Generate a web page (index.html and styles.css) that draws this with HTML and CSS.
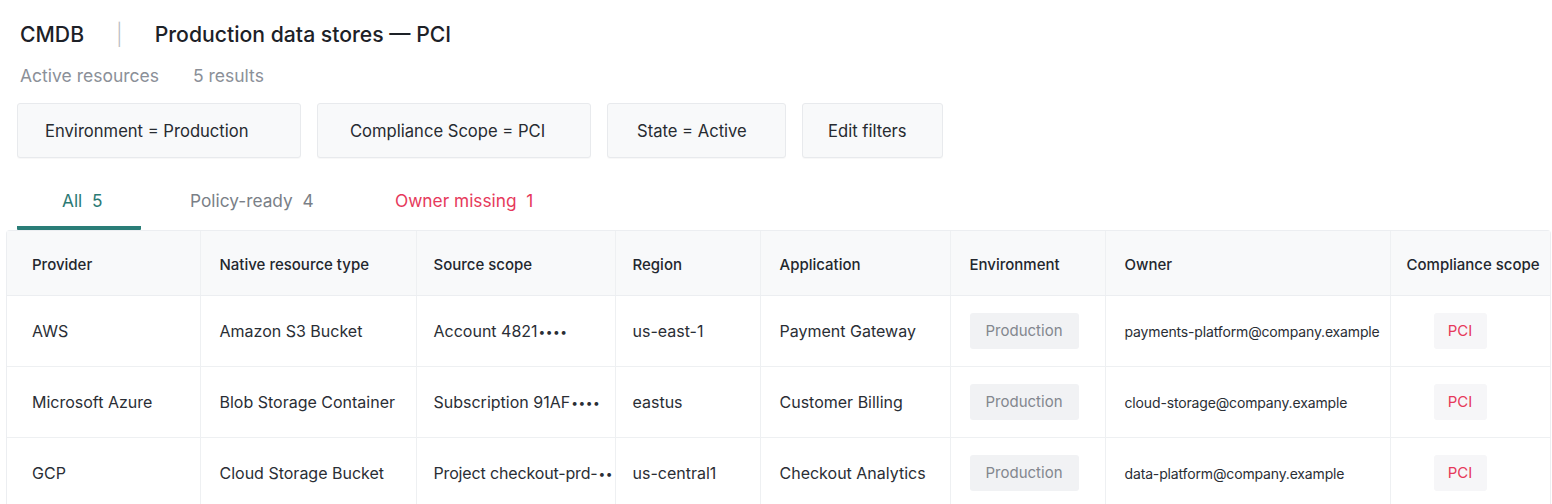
FILE: index.html
```html
<!DOCTYPE html>
<html lang="en">
<head>
<meta charset="utf-8">
<title>CMDB — Production data stores — PCI</title>
<link rel="stylesheet" href="styles.css">
</head>
<body>
<div class="page">
  <header class="head">
    <h1 class="title"><span class="crumb">CMDB</span><span class="sep">|</span><span class="view">Production data stores — PCI</span></h1>
    <div class="sub"><span>Active resources</span><span>5 results</span></div>
  </header>
  <div class="filters">
    <button class="chip chip-env">Environment = Production</button>
    <button class="chip chip-scope">Compliance Scope = PCI</button>
    <button class="chip chip-state">State = Active</button>
    <button class="chip chip-edit">Edit filters</button>
  </div>
  <nav class="tabs">
    <a class="tab tab-active">All&nbsp; 5</a>
    <a class="tab tab-muted">Policy-ready&nbsp; 4</a>
    <a class="tab tab-alert">Owner missing&nbsp; 1</a>
  </nav>
  <div class="table-wrap">
    <table class="grid">
      <colgroup>
        <col class="c1"><col class="c2"><col class="c3"><col class="c4"><col class="c5"><col class="c6"><col class="c7"><col class="c8">
      </colgroup>
      <thead>
        <tr>
          <th class="p1">Provider</th>
          <th>Native resource type</th>
          <th class="p3">Source scope</th>
          <th class="p3">Region</th>
          <th>Application</th>
          <th>Environment</th>
          <th>Owner</th>
          <th class="p8">Compliance scope</th>
        </tr>
      </thead>
      <tbody>
        <tr>
          <td class="p1">AWS</td>
          <td>Amazon S3 Bucket</td>
          <td class="p3">Account 4821<span class="mask">••••</span></td>
          <td class="p3">us-east-1</td>
          <td>Payment Gateway</td>
          <td><span class="badge badge-env">Production</span></td>
          <td class="owner">payments-platform@company.example</td>
          <td class="pci-cell"><span class="badge badge-pci">PCI</span></td>
        </tr>
        <tr>
          <td class="p1">Microsoft Azure</td>
          <td>Blob Storage Container</td>
          <td class="p3">Subscription 91AF<span class="mask">••••</span></td>
          <td class="p3">eastus</td>
          <td>Customer Billing</td>
          <td><span class="badge badge-env">Production</span></td>
          <td class="owner">cloud-storage@company.example</td>
          <td class="pci-cell"><span class="badge badge-pci">PCI</span></td>
        </tr>
        <tr>
          <td class="p1">GCP</td>
          <td>Cloud Storage Bucket</td>
          <td class="p3 tight">Project checkout-prd-<span class="mask">••</span></td>
          <td class="p3">us-central1</td>
          <td>Checkout Analytics</td>
          <td><span class="badge badge-env">Production</span></td>
          <td class="owner">data-platform@company.example</td>
          <td class="pci-cell"><span class="badge badge-pci">PCI</span></td>
        </tr>
      </tbody>
    </table>
  </div>
</div>
</body>
</html>
```

FILE: styles.css
```css
* { box-sizing: border-box; }
html, body { margin: 0; padding: 0; background: #ffffff; }
body {
  font-family: Inter, "Noto Sans", "Liberation Sans", sans-serif;
  color: #23272e;
  overflow: hidden;
}
.page { padding: 0 0 0 6px; }

.head { padding: 19px 0 0 14px; }
.title {
  margin: 0;
  font-size: 21.2px;
  font-weight: 500;
  line-height: 30px;
  color: #1d2127;
  display: flex;
  align-items: center;
}
.sep { color: #b9bdc3; font-weight: 300; margin: 0 32px 0 32px; }
.sub {
  margin-top: 16px;
  display: flex;
  gap: 34px;
  font-size: 17.5px;
  line-height: 22px;
  color: #8b9098;
}

.filters {
  display: flex;
  gap: 16px;
  padding: 16px 0 0 11px;
}
.chip {
  font: inherit;
  font-size: 16.6px;
  color: #272b31;
  background: #f8f9fa;
  border: 1px solid #e8eaed;
  border-radius: 3px;
  height: 55px;
  padding: 0 27px;
  box-shadow: 0 1px 1px rgba(0,0,0,0.03);
  text-align: left;
}
.chip-env { width: 284px; }
.chip-scope { width: 274px; padding-left: 32px; }
.chip-state { width: 179px; padding-left: 29px; }
.chip-edit { width: 141px; padding-left: 25px; }

.tabs {
  display: flex;
  padding: 15px 0 0 11px;
  height: 72px;
}
.tab {
  font-size: 17.3px;
  line-height: 20px;
  padding: 18px 0 0;
  text-decoration: none;
}
.tab-active {
  color: #2b7a74;
  width: 124px;
  padding-left: 45px;
  border-bottom: 4px solid #2a7d77;
  border-radius: 1px;
}
.tab-muted { color: #7a7f87; padding-left: 49px; width: 254px; }
.tab-alert { color: #e6395b; }

.table-wrap {
  border: 1px solid #eceef1;
  border-bottom: none;
  border-radius: 4px 4px 0 0;
  width: 1545px;
}
.grid {
  border-collapse: collapse;
  table-layout: fixed;
  width: 100%;
}
.c1 { width: 193px; } .c2 { width: 216px; } .c3 { width: 199px; } .c4 { width: 145px; }
.c5 { width: 190px; } .c6 { width: 155px; } .c7 { width: 285px; } .c8 { width: 160px; }

.grid th, .grid td {
  text-align: left;
  padding: 0 0 0 19px;
  border-left: 1px solid #eef0f2;
  white-space: nowrap;
  overflow: hidden;
}
.grid th:first-child, .grid td:first-child { border-left: none; }
.grid th {
  height: 64px;
  padding-top: 3px;
  background: #f8f9fa;
  font-size: 15px;
  font-weight: 500;
  color: #23272e;
  border-bottom: 1px solid #eceef1;
}
.grid td {
  height: 71px;
  padding-top: 1px;
  font-size: 16px;
  color: #2a2e35;
  border-bottom: 1px solid #eef0f2;
}
.grid .p1 { padding-left: 25px; }
.grid .p3 { padding-left: 17px; }
.grid .p8 { padding-left: 16px; }
.grid td.tight { letter-spacing: -0.15px; }
.mask { font-size: 12px; letter-spacing: 0.5px; margin-left: 1px; position: relative; top: -1px; }
.grid td.owner { font-size: 14px; letter-spacing: -0.15px; }
.grid td.pci-cell { padding-left: 43px; }

.badge {
  display: inline-block;
  height: 36px;
  line-height: 36px;
  border-radius: 3px;
  font-size: 15px;
}
.badge-env {
  width: 109px;
  text-align: center;
  background: #f1f2f4;
  color: #83878e;
}
.badge-pci {
  width: 53px;
  text-align: center;
  background: #f6f6f8;
  color: #e6395b;
}
```
